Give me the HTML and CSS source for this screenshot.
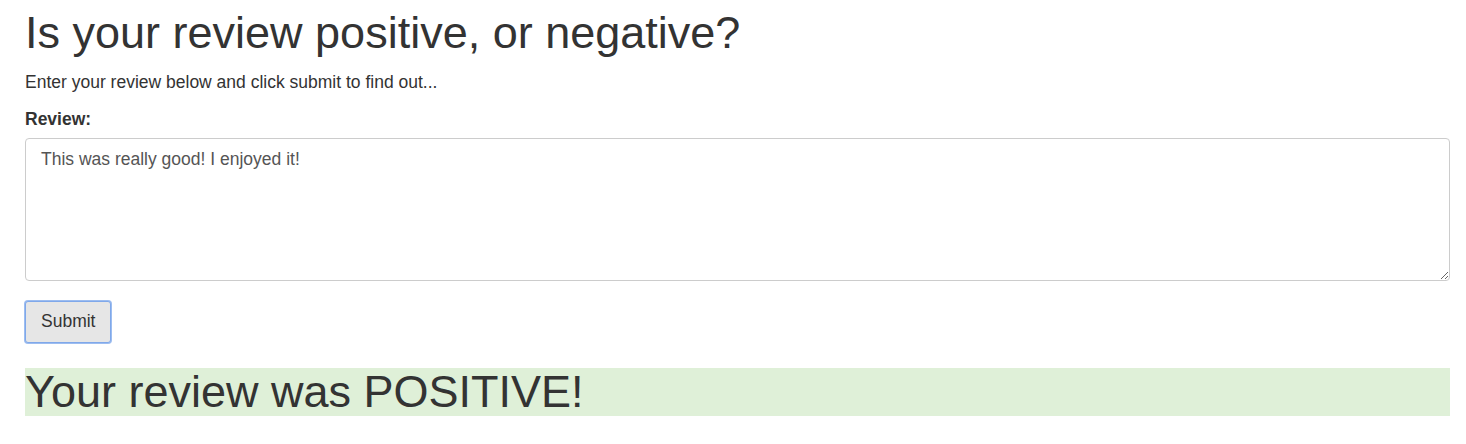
FILE: index.html
```html
<!DOCTYPE html>
<html>
<head>
<meta charset="utf-8">
<link rel="stylesheet" href="styles.css">
</head>
<body>
<div class="container">
  <h1 class="title">Is your review positive, or negative?</h1>
  <p class="lead-text">Enter your review below and click submit to find out...</p>
  <form class="review-form">
    <label class="field-label" for="review">Review:</label>
    <textarea id="review" class="review-input">This was really good! I enjoyed it!</textarea>
    <button type="button" class="submit-btn">Submit</button>
  </form>
  <h1 class="result">Your review was POSITIVE!</h1>
</div>
</body>
</html>
```
FILE: styles.css
```css
html, body {
  margin: 0;
  padding: 0;
  background: #fff;
}
body {
  font-family: "Liberation Sans", Arial, sans-serif;
  color: #333;
  font-size: 17.5px;
  line-height: 1.42857;
}
.container {
  padding: 0 16px 0 25px;
}
.title {
  font-size: 45px;
  font-weight: 400;
  line-height: 1.1;
  margin: 8px 0 12.5px;
}
.lead-text {
  margin: 0 0 12.5px;
}
.review-form {
  display: flex;
  flex-direction: column;
  align-items: flex-start;
}
.field-label {
  font-weight: 700;
  margin: 0 0 6px;
}
.review-input {
  box-sizing: border-box;
  width: 100%;
  height: 143px;
  padding: 7.5px 15px;
  border: 1px solid #ccc;
  border-radius: 4px;
  font-family: inherit;
  font-size: 17.5px;
  color: #555;
  line-height: 1.42857;
  resize: both;
  margin: 0;
}
.submit-btn {
  margin-top: 19.5px;
  box-sizing: border-box;
  height: 42px;
  padding: 7px 15px;
  font-family: inherit;
  font-size: 17.5px;
  line-height: 1.42857;
  color: #333;
  background: #e6e6e6;
  border: 1px solid #7fa8ea;
  border-radius: 3px;
  outline: none;
  box-shadow: 0 0 0 1px #9dbdf0;
}
.result {
  margin: 25px 0 0;
  background: #dff0d8;
  font-size: 45px;
  font-weight: 400;
  line-height: 48.5px;
}
```
